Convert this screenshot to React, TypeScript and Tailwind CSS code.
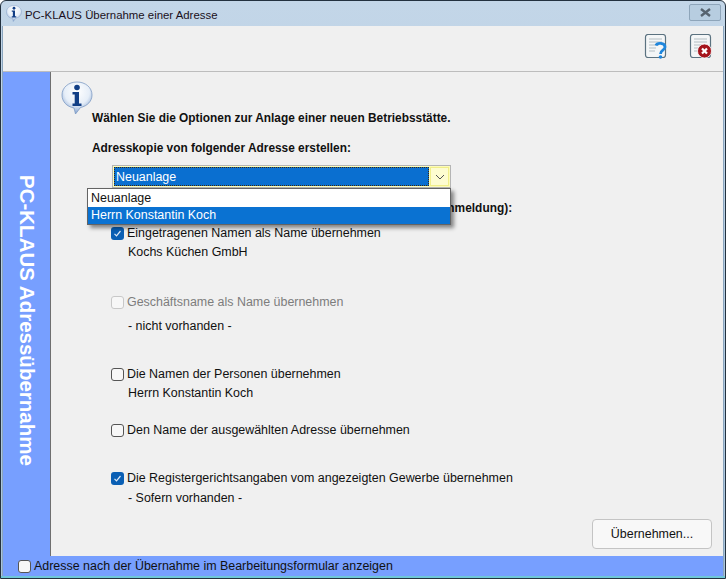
const font = { fontFamily: '"Liberation Sans", Arial, sans-serif' };

function InfoIcon({ size }: { size: number }) {
  return (
    <svg width={size} height={Math.round((size * 34) / 32)} viewBox="0 0 32 34" className="block shrink-0">
      <defs>
        <radialGradient id={`g${size}`} cx="0.5" cy="0.3" r="0.75">
          <stop offset="0" stopColor="#ffffff" />
          <stop offset="0.55" stopColor="#e6eef8" />
          <stop offset="1" stopColor="#6f93c6" />
        </radialGradient>
      </defs>
      <path d="M16 1C7.500 1 1 6.500 1 14c0 6.500 4.500 11.500 12 13l1.500 6 5-6.500C26.500 25 31 20 31 14 31 6.500 24.500 1 16 1z" fill={`url(#g${size})`} stroke="#7e9bc4" strokeWidth="0.800" />
      <circle cx="16" cy="6.500" r="2.800" fill="#123f86" />
      <path d="M11.500 11h6.500v11.500h2.500v2.500h-9v-2.500h2.200v-9h-2.200z" fill="#123f86" />
    </svg>
  );
}

function DocIcon({ kind }: { kind: 'help' | 'close' }) {
  return (
    <svg width="24" height="25" viewBox="0 0 24 25" className="block">
      <rect x="1.500" y="0.500" width="20" height="23" rx="2.500" fill="#f4f6f7" stroke="#5b7280" strokeWidth="1.200" />
      <path d="M5 5h13M5 8h13M5 11h10M5 14h7M5 17h6" stroke="#b4bec4" strokeWidth="1.200" />
      {kind === 'help' ? (
        <g>
          <path d="M12 11.500c1-3 9-3 9 1.500 0 3.500-4.500 3-4.500 7" fill="none" stroke="#1f86dc" strokeWidth="2.800" />
          <circle cx="16.500" cy="23" r="1.800" fill="#1f86dc" />
        </g>
      ) : (
        <g>
          <circle cx="15.500" cy="17" r="7" fill="#a5141c" stroke="#fff" strokeWidth="0.800" />
          <path d="M13 14.500l5 5M18 14.500l-5 5" stroke="#fff" strokeWidth="2.200" />
        </g>
      )}
    </svg>
  );
}

function Check({ checked, disabled }: { checked?: boolean; disabled?: boolean }) {
  if (checked) {
    return (
      <span className="flex h-[13px] w-[13px] shrink-0 items-center justify-center rounded-[3px] bg-[#0a5fb4]">
        <svg width="9" height="9" viewBox="0 0 9 9"><path d="M1.500 4.800l2 2 4-4.800" fill="none" stroke="#dfeaf6" strokeWidth="1.200" /></svg>
      </span>
    );
  }
  return (
    <span className={`block h-[13px] w-[13px] shrink-0 rounded-[3px] border bg-[#f7f7f7] ${disabled ? 'border-[#c8c8c8]' : 'border-[#555555]'}`} />
  );
}

function Option({ label, checked, disabled, top }: { label: string; checked?: boolean; disabled?: boolean; top: string }) {
  return (
    <div className={top}>
      <div className="flex h-4 items-center gap-[3px] pl-[20px]">
        <Check checked={checked} disabled={disabled} />
        <span className={disabled ? 'text-[#7d7d7d]' : ''}>{label}</span>
      </div>
    </div>
  );
}

export default function App() {
  return (
    <div style={font} className="flex h-[579px] w-[726px] flex-col overflow-hidden rounded-t-[6px] border border-[#23313f] bg-gradient-to-b from-[#c3d6e8] to-[#a9c4dc] text-[12.450px] leading-4 text-[#111111]">
      <div className="flex h-[25px] shrink-0 items-center pl-[5px] pr-[4px]">
        <InfoIcon size={16} />
        <span className="ml-[3px] mt-[2px] text-[11.400px] text-[#1a1020]">PC-KLAUS Übernahme einer Adresse</span>
        <div className="ml-auto mb-[2px] flex h-[17px] w-[32px] items-center justify-center rounded-[2px] border border-[#8ea5ba] bg-[#b7cde0]">
          <svg width="13" height="9" viewBox="0 0 13 9"><path d="M2 1l9 7M11 1l-9 7" stroke="#56636f" strokeWidth="2.400" /></svg>
        </div>
      </div>
      <div className="flex min-h-0 flex-1 flex-col border-x border-[#8aa5be] bg-[#f0f0f0] mx-[1px]">
        <div className="flex h-[46px] shrink-0 items-start justify-end gap-[21px] border-b border-[#bdbdbd] pr-[10px] pt-[8px]">
          <DocIcon kind="help" />
          <DocIcon kind="close" />
        </div>
        <div className="flex min-h-0 flex-1">
          <div className="flex w-[48px] shrink-0 items-center justify-center border-r border-[#6f6f6f] bg-[#779fff] pt-[12px]">
            <span className="whitespace-nowrap text-[20.500px] font-bold leading-none text-white [writing-mode:vertical-rl]">PC-KLAUS Adressübernahme</span>
          </div>
          <div className="relative flex min-w-0 flex-1 flex-col">
            <div className="pl-[10px] pt-[9px]"><InfoIcon size={32} /></div>
            <div className="-mt-[5px] pl-[41px] text-[11.880px] font-bold">Wählen Sie die Optionen zur Anlage einer neuen Betriebsstätte.</div>
            <div className="pl-[41px] pt-[14px] text-[11.880px] font-bold">Adresskopie von folgender Adresse erstellen:</div>
            <div className="ml-[61px] mt-[9px] flex h-[23px] w-[339px] items-center border border-[#b5b5b5] bg-[#fdfcb8] p-[1px]">
              <div className="flex h-full flex-1 items-center border border-dotted border-[#3a2a10] bg-[#0a6fd0] pl-[1px] text-white">Neuanlage</div>
              <div className="ml-[1px] flex h-full w-[19px] items-center justify-center border border-[#f0ee8a] bg-[#fdfcd0]">
                <svg width="10" height="6" viewBox="0 0 10 6"><path d="M1 1l4 4 4-4" fill="none" stroke="#555555" strokeWidth="1" /></svg>
              </div>
            </div>
            <div className="pl-[41px] pt-[12px] text-[11.880px] font-bold tracking-[0.03px]">Name sowie Anschrift für die neue Adresse (aus der Gewerbeanmeldung):</div>
            <div className="pt-[9px]">
              <Option top="ml-[40px]" label="Eingetragenen Namen als Name übernehmen" checked />
              <div className="pl-[77px] pt-[3px]">Kochs Küchen GmbH</div>
              <Option top="ml-[40px] mt-[34px]" label="Geschäftsname als Name übernehmen" disabled />
              <div className="pl-[77px] pt-[8px]">- nicht vorhanden -</div>
              <Option top="ml-[40px] mt-[32px]" label="Die Namen der Personen übernehmen" />
              <div className="pl-[77px] pt-[3px]">Herrn Konstantin Koch</div>
              <Option top="ml-[40px] mt-[21px]" label="Den Name der ausgewählten Adresse übernehmen" />
              <Option top="ml-[40px] mt-[32px]" label="Die Registergerichtsangaben vom angezeigten Gewerbe übernehmen" checked />
              <div className="pl-[77px] pt-[4px]">- Sofern vorhanden -</div>
            </div>
            <div className="mt-auto flex justify-end pb-[7px] pr-[11px]">
              <button className="h-[30px] w-[120px] rounded-[4px] border border-[#c4c4c4] bg-[#f8f8f8]">Übernehmen...</button>
            </div>
            <div className="absolute left-[36px] top-[116px] w-[364px] border border-[#646464] bg-white shadow-[3px_3px_4px_rgba(0,0,0,0.45)]">
              <div className="h-[18px] pl-[3px] leading-[18px]">Neuanlage</div>
              <div className="h-[17px] bg-[#0a72d2] pl-[3px] leading-[17px] text-white">Herrn Konstantin Koch</div>
            </div>
          </div>
        </div>
        <div className="flex h-[20px] shrink-0 items-center gap-[3px] bg-[#779fff] pl-[15px]">
          <Check />
          <span>Adresse nach der Übernahme im Bearbeitungsformular anzeigen</span>
        </div>
      </div>
      <div className="h-[2px] shrink-0 bg-[#6fc6d8]" />
    </div>
  );
}
